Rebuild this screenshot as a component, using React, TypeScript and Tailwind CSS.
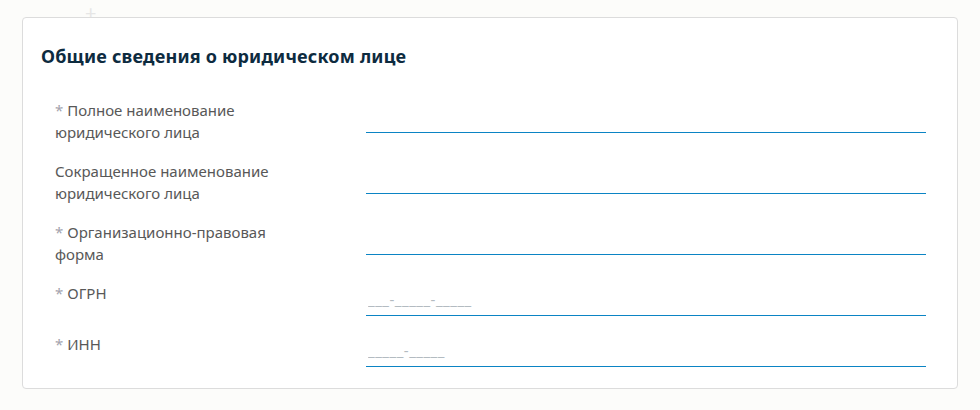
import React from "react";

type Field = {
  lines: string[];
  required: boolean;
  mask?: string;
};

const fields: Field[] = [
  { lines: ["Полное наименование", "юридического лица"], required: true },
  { lines: ["Сокращенное наименование", "юридического лица"], required: false },
  { lines: ["Организационно-правовая", "форма"], required: true },
  { lines: ["ОГРН"], required: true, mask: "___-_____-_____" },
  { lines: ["ИНН"], required: true, mask: "_____-_____" },
];

function FieldRow({ field }: { field: Field }) {
  return (
    <div className="flex items-start">
      <label className="w-[311px] shrink-0 text-[15px] leading-[22px] text-[#585858]">
        {field.lines.map((line, i) => (
          <span key={i} className="block">
            {i === 0 && field.required && (
              <span className="text-[#a3a3ad] mr-[4px]">*</span>
            )}
            {line}
          </span>
        ))}
      </label>
      <input
        type="text"
        placeholder={field.mask}
        className="flex-1 h-[34px] pl-[2px] pt-[1px] bg-transparent border-b border-[#0b84c4] text-[15px] tracking-[0.5px] text-[#333] outline-none placeholder:text-[#b3bbc1]"
      />
    </div>
  );
}

export default function App() {
  return (
    <div
      className="min-h-[410px] bg-[#fcfcfa] px-[22px]"
      style={{ fontFamily: '"Noto Sans", "Open Sans", sans-serif' }}
    >
      <div className="h-[17px] relative">
        <span className="absolute left-[63px] top-[3px] text-[20px] leading-[20px] text-[#e6e6e6]">+</span>
      </div>
      <div className="relative bg-white border border-[#dcdcdc] rounded-[4px] px-[18px] pt-[26px] pb-[21px]">
        <h2 className="text-[18px] leading-[24px] font-bold tracking-[0.2px] text-[#0d2b3f]">
          Общие сведения о юридическом лице
        </h2>
        <form className="mt-[31px] pl-[14px] pr-[13px] flex flex-col gap-[17px]">
          {fields.map((f, i) => (
            <FieldRow key={i} field={f} />
          ))}
        </form>
      </div>
    </div>
  );
}
